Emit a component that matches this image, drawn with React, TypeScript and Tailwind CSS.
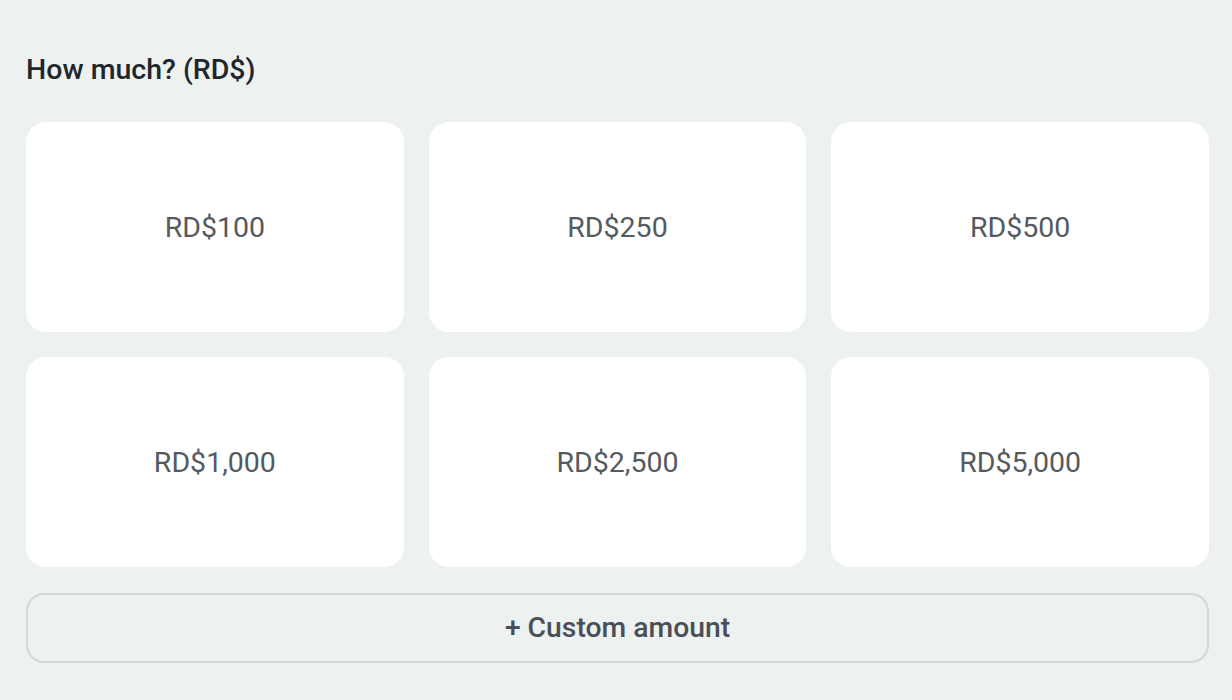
import React from "react";

const AMOUNTS = ["RD$100", "RD$250", "RD$500", "RD$1,000", "RD$2,500", "RD$5,000"];

export default function App() {
  return (
    <div className="min-h-[700px] w-full bg-[#edf1f0] pl-[26px] pr-[23px] pt-[52px] pb-8" style={{ fontFamily: "Roboto, 'Noto Sans', sans-serif" }}>
      <h2 className="text-[28.5px] font-[500] leading-[36px] text-[#22262c]">How much? (RD$)</h2>
      <div className="mt-[34px] grid grid-cols-3 gap-x-[25px] gap-y-[25px]">
        {AMOUNTS.map((a) => (
          <button key={a} className="flex h-[210px] items-center justify-center rounded-[20px] bg-white pt-[2px] text-[28.5px] text-[#555a61]">
            {a}
          </button>
        ))}
      </div>
      <button className="mt-[26px] flex h-[70px] w-full items-center justify-center rounded-[18px] border-2 border-[#d3d8d7] text-[28.3px] font-[500] text-[#4a4f57]">
        + Custom amount
      </button>
    </div>
  );
}
